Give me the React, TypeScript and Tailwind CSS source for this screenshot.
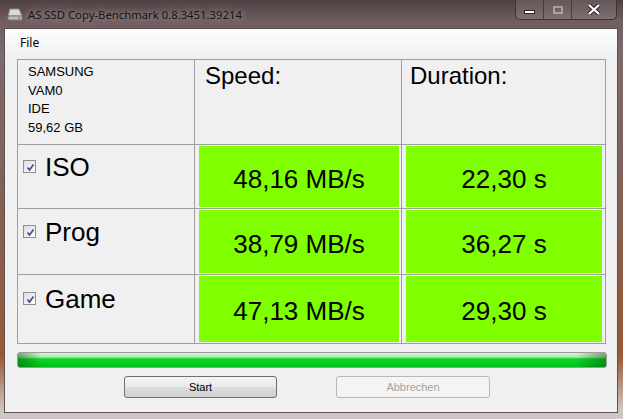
import React from "react";

const rows = [
  { name: "ISO", speed: "48,16 MB/s", time: "22,30 s", pad: "pt-[7px]" },
  { name: "Prog", speed: "38,79 MB/s", time: "36,27 s", pad: "pt-[8px]" },
  { name: "Game", speed: "47,13 MB/s", time: "29,30 s", pad: "pt-[9px]" },
];

function DriveIcon() {
  return (
    <svg width="16" height="15" viewBox="0 0 16 15">
      <path d="M3 2 L12 2 L15 9 L1 9 Z" fill="#d9d9d9" stroke="#8a8a8a" strokeWidth="1" />
      <rect x="1" y="9" width="14" height="4" fill="#bdbdbd" stroke="#7a7a7a" strokeWidth="1" />
      <rect x="11" y="10.5" width="2" height="1" fill="#5a5a5a" />
    </svg>
  );
}

function CheckBox() {
  return (
    <div className="mt-[8px] h-[13px] w-[13px] shrink-0 border border-[#8e8f8f] bg-[linear-gradient(135deg,#dcdcdc,#ffffff)] p-[1px]">
      <svg width="11" height="11" viewBox="0 0 11 11">
        <path d="M2.5 5.5 L4.5 8 L8.5 2.5" fill="none" stroke="#3f5596" strokeWidth="1.8" />
      </svg>
    </div>
  );
}

function CaptionButtons() {
  return (
    <div className="mr-[6px] flex h-[20px] overflow-hidden rounded-b-[5px] border border-t-0 border-[#3d3234] bg-[rgba(255,255,255,0.12)]">
      <div className="flex w-[28px] items-center justify-center border-r border-[#4a3e40]">
        <div className="mt-[4px] h-[4px] w-[11px] border border-[#2a2224] bg-white" />
      </div>
      <div className="flex w-[28px] items-center justify-center border-r border-[#4a3e40]">
        <div className="h-[8px] w-[10px] border-2 border-[rgba(230,230,230,0.45)]" />
      </div>
      <div className="flex w-[44px] items-center justify-center">
        <svg width="14" height="11" viewBox="0 0 14 11">
          <path d="M2 1 L12 10 M12 1 L2 10" stroke="#2a2224" strokeWidth="4" />
          <path d="M2 1 L12 10 M12 1 L2 10" stroke="#ffffff" strokeWidth="2.2" />
        </svg>
      </div>
    </div>
  );
}

export default function App() {
  return (
    <div className="h-[419px] w-[623px] overflow-hidden bg-[linear-gradient(180deg,#4f4143_0%,#6f5d5f_5%,#7c6a6b_12%,#7e6560_35%,#8d5c45_65%,#9a5a35_85%,#cfc6c4_98%)]">
      <div className="flex h-[28px] items-start">
        <div className="ml-[7px] mt-[7px]">
          <DriveIcon />
        </div>
        <span className="ml-[5px] mt-[6px] font-['Noto_Sans',sans-serif] text-[11.3px] leading-[18px] text-[#141414] [text-shadow:0_0_6px_rgba(255,255,255,0.55)]">
          AS SSD Copy-Benchmark 0.8.3451.39214
        </span>
        <div className="ml-auto">
          <CaptionButtons />
        </div>
      </div>

      <div className="ml-[4px] h-[385px] w-[614px] border border-[#5e5052] bg-[#f0f0f0]">
        <div className="flex h-[24px] items-center bg-[linear-gradient(180deg,#fdfdfd,#f3f3f3)] pl-[15px] pt-[4px] font-['Noto_Sans',sans-serif] text-[12px] text-black">
          File
        </div>

        <div className="ml-[12px] mt-[6px] grid w-[589px] grid-cols-[176px_206px_203px] grid-rows-[84px_63px_65px_68px] gap-px bg-[#a0a0a0] p-px font-['Liberation_Sans',Arial,sans-serif] text-black">
          <div className="bg-[#f0f0f0] pl-[10px] pt-[3px] text-[13px] leading-[18.5px]">
            <div>SAMSUNG</div>
            <div>VAM0</div>
            <div>IDE</div>
            <div>59,62 GB</div>
          </div>
          <div className="bg-[#f0f0f0] pl-[10px] pt-[2px] text-[24px] leading-[28px]">Speed:</div>
          <div className="bg-[#f0f0f0] pl-[8px] pt-[2px] text-[24px] leading-[28px]">Duration:</div>

          {rows.map((r) => (
            <React.Fragment key={r.name}>
              <div className={`flex items-start gap-[9px] bg-[#f0f0f0] pl-[5px] ${r.pad}`}>
                <CheckBox />
                <span className="text-[26px] leading-[30px]">{r.name}</span>
              </div>
              <div className="flex bg-[#f0f0f0] py-[1px] pl-[4px] pr-[2px]">
                <div className="flex flex-1 items-center justify-center bg-[#7fff00] pt-[4px] text-[26px] leading-[30px]">
                  {r.speed}
                </div>
              </div>
              <div className="flex bg-[#f0f0f0] py-[1px] pl-[4px] pr-[3px]">
                <div className="flex flex-1 items-center justify-center bg-[#7fff00] pt-[4px] text-[26px] leading-[30px]">
                  {r.time}
                </div>
              </div>
            </React.Fragment>
          ))}
        </div>

        <div className="ml-[12px] mt-[8px] h-[16px] w-[590px] overflow-hidden rounded-[3px] border border-[#9c9c9c] bg-[linear-gradient(180deg,#dcf6dc_0%,#a6eaa6_30%,#10d428_42%,#00cc20_75%,#06b81c_100%)]">
          <div className="h-full w-full bg-[linear-gradient(90deg,rgba(0,70,0,0.45)_0%,rgba(0,70,0,0)_4%,rgba(0,70,0,0)_95%,rgba(0,70,0,0.45)_100%)]" />
        </div>

        <div className="mt-[8px] flex font-['Liberation_Sans',Arial,sans-serif] text-[11px]">
          <button className="ml-[119px] flex h-[22px] w-[153px] items-center justify-center rounded-[3px] border border-[#707070] bg-[linear-gradient(180deg,#f3f3f3_0%,#ebebeb_48%,#dddddd_52%,#cfcfcf_100%)] text-black">
            Start
          </button>
          <button className="ml-[59px] flex h-[22px] w-[154px] items-center justify-center rounded-[3px] border border-[#b5b9bc] bg-[#f4f4f4] text-[#a3a3a3]">
            Abbrechen
          </button>
        </div>
      </div>
    </div>
  );
}
